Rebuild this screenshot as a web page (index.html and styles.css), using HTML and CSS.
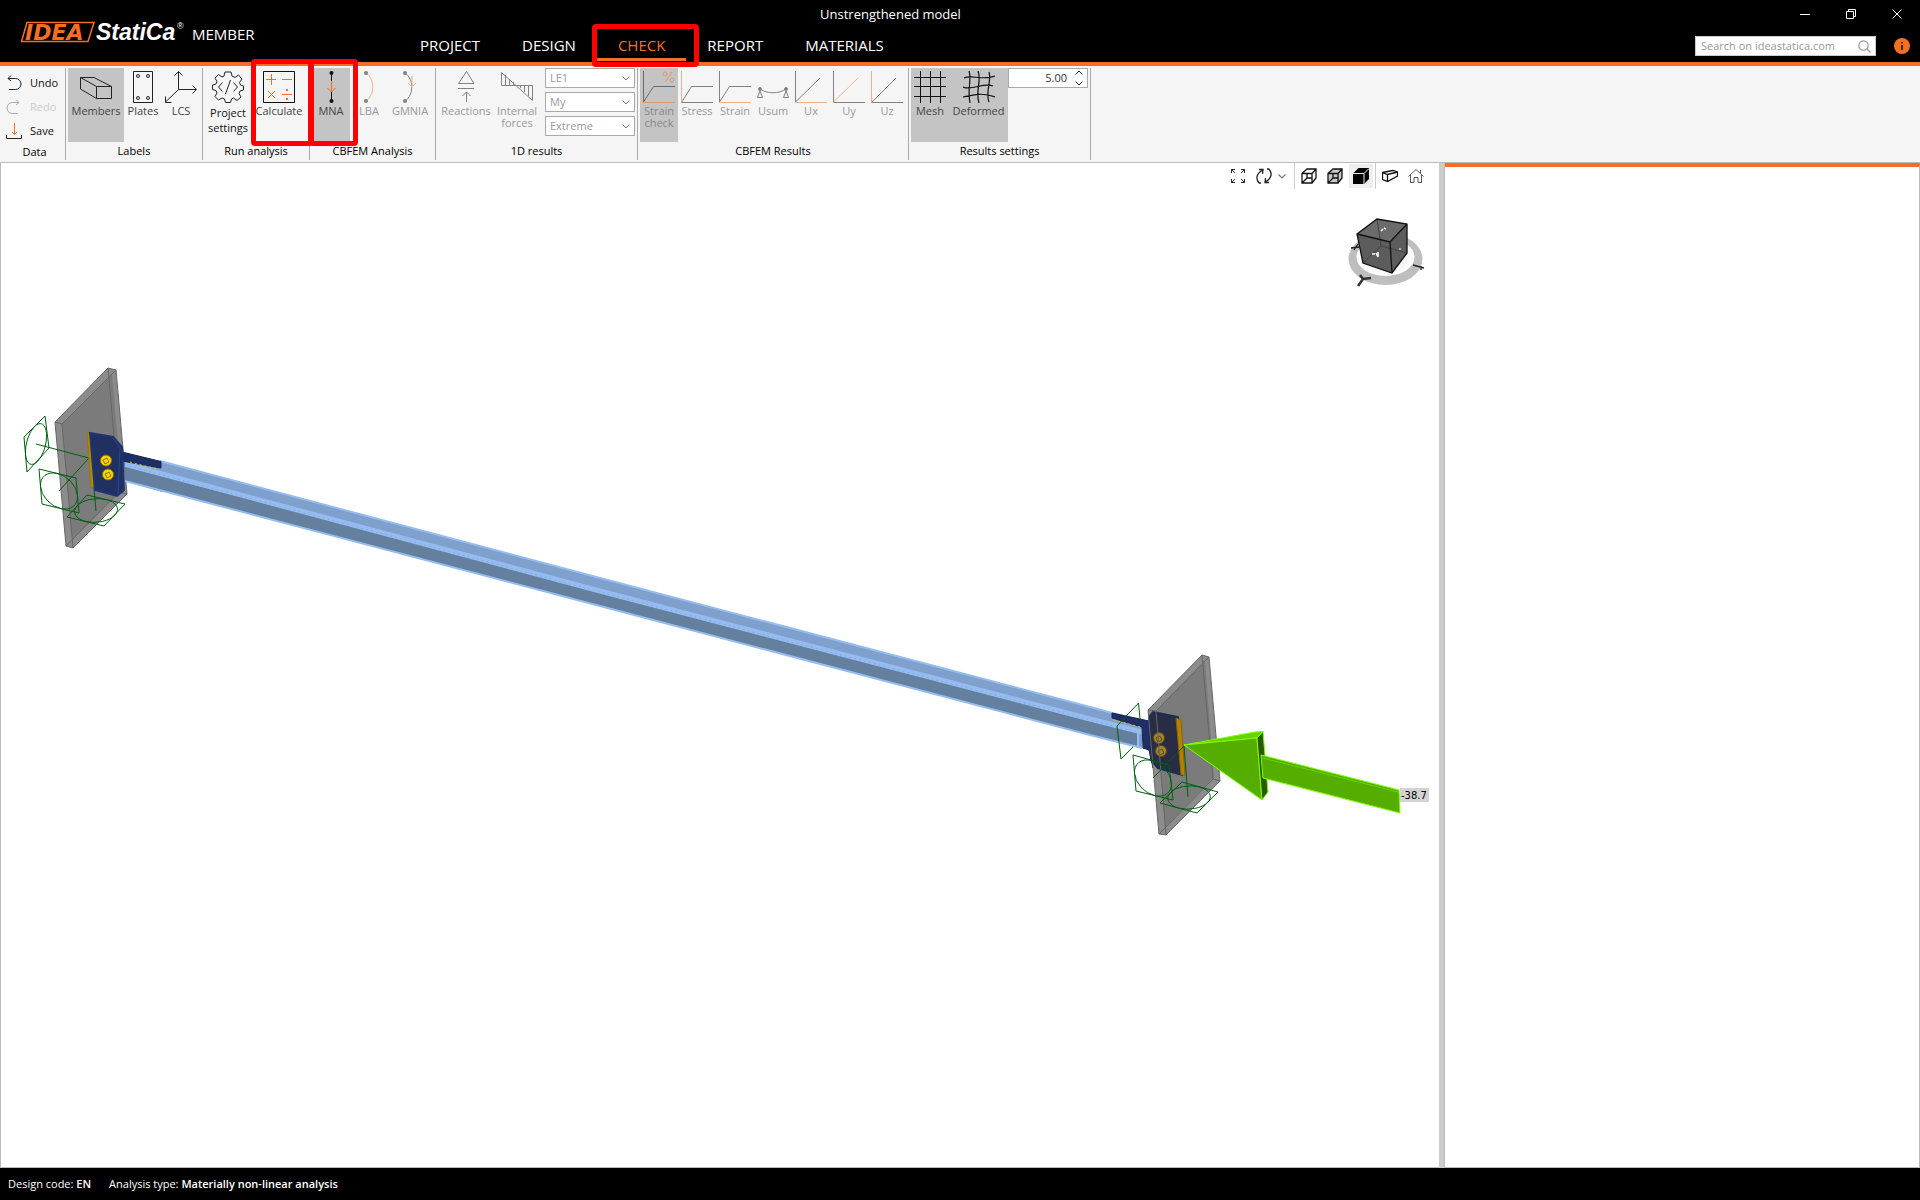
FILE: index.html
```html
<!DOCTYPE html>
<html lang="en">
<head>
<meta charset="utf-8">
<title>Unstrengthened model - IDEA StatiCa Member</title>
<link rel="stylesheet" href="styles.css">
</head>
<body>
<header class="header">
  <div class="brand">
    <svg class="logo" width="168" height="26" viewBox="0 0 168 26" role="img" aria-label="IDEA StatiCa">
      <path d="M7 3.500H74L68 22.500H1.500Z" fill="#000" stroke="#f36f21" stroke-width="1.500"/>
      <text x="5" y="20.500" class="logo-idea">IDEA</text>
      <text x="76" y="21" class="logo-name">StatiCa</text>
      <text x="157" y="10" class="logo-reg">®</text>
    </svg>
    <span class="product">MEMBER</span>
  </div>
  <h1 class="title">Unstrengthened model</h1>
  <div class="window-controls">
    <button aria-label="Minimize"><svg width="10" height="10"><path d="M0 5.500H10" stroke="#fff"/></svg></button>
    <button aria-label="Restore"><svg width="10" height="10" fill="none" stroke="#fff"><path d="M.5 2.500H7.500V9.500H.5ZM2.500 2V.5H9.500V7.500H8"/></svg></button>
    <button aria-label="Close"><svg width="10" height="10"><path d="M.5.5L9.500 9.500M9.500.5L.5 9.500" stroke="#fff"/></svg></button>
  </div>
  <nav class="tabs">
    <a href="#project">PROJECT</a>
    <a href="#design">DESIGN</a>
    <a href="#check" class="active" aria-current="page">CHECK<i class="mark mark-tab"></i></a>
    <a href="#report">REPORT</a>
    <a href="#materials">MATERIALS</a>
  </nav>
  <div class="tools">
    <div class="search">
      <input type="text" aria-label="Search" placeholder="Search on ideastatica.com">
      <svg width="13" height="13" fill="none" stroke="#999" stroke-width="1.200"><circle cx="5.500" cy="5.500" r="4.700"/><path d="M9 9L12.500 12.500"/></svg>
    </div>
    <button class="info" aria-label="Information"><svg width="16" height="16"><circle cx="8" cy="8" r="8" fill="#f36f21"/><path d="M7 4H9V5.500H7ZM7 7H9V12H7Z" fill="#4a2410"/></svg></button>
  </div>
</header>

<section class="ribbon" aria-label="Ribbon">
  <div class="group data">
    <div class="stack">
      <button><svg width="16" height="16" fill="none" stroke="#222"><path d="M5 .5L2 3.500L5 6M2 3.500H9.500A5.500 5.500 0 0 1 9.500 14.500H3"/></svg>Undo</button>
      <button disabled><svg width="16" height="16" fill="none" stroke="#aaa"><path d="M10 .5L13 3.500L10 6M13 3.500H6.500A5.500 5.500 0 0 0 6.500 14.500H12"/></svg>Redo</button>
      <button><svg width="16" height="16" fill="none"><path d="M.5 12V15.500H15.500V12" stroke="#222"/><path d="M8.500 0V11.500M6 9L8.500 11.500L11 9" stroke="#f36f21"/></svg>Save</button>
    </div>
    <h2>Data</h2>
  </div>

  <div class="group">
    <div class="items">
      <button class="cmd w56 on"><svg width="32" height="32" fill="none" stroke="#222"><path d="M.5 6.500H14L31.500 15.500V27.500H16.500L.5 18ZM.5 6.500L16.500 15.500H31.500M16.500 15.500V27.500"/></svg>Members</button>
      <button class="cmd w38"><svg width="32" height="32" fill="none" stroke="#222"><path d="M6.500.5H25.500V31.500H6.500Z"/><circle cx="11" cy="5" r="1.500"/><circle cx="21" cy="5" r="1.500"/><circle cx="11" cy="27" r="1.500"/><circle cx="21" cy="27" r="1.500"/></svg>Plates</button>
      <button class="cmd w38"><svg width="32" height="32" fill="none" stroke="#222"><path d="M13.500 1V18.500H31M9.500 4.500L13.500.5L17.500 4.500M27.500 14.500L31.500 18.500L27.500 22.500M13.500 18.500L.5 31M.5 25.500V31.500H6.500"/></svg>LCS</button>
    </div>
    <h2>Labels</h2>
  </div>

  <div class="group">
    <div class="items">
      <button class="cmd settings"><svg width="32" height="32" fill="none" stroke="#222"><path d="M13 1H19L20 5L23 6.500L26.500 4L30 8L27.500 11.500L28.500 14L31.500 15V19L28 20L27 22.500L29 26L25 29.500L21.500 27L19.500 28L18.500 31.500H13.500L12.500 28L10 27L6.500 29L3 25.500L5 22L4 19.500L.5 18.500V14L4 13L5 10.500L3 7L6.500 3.500L10 6L12 5Z"/><path d="M10.500 11.500L6.500 16L10.500 20.500M21.500 11.500L25.500 16L21.500 20.500M18.500 9L13.500 23"/></svg>Project<br>settings</button>
      <button class="cmd w56"><svg width="32" height="32" fill="none"><path d="M.5.5H31.500V31.500H.5Z" stroke="#111"/><path d="M3 8.500H13M8.500 3V14M19 8.500H29M5 20L12 27M12 20L5 27M19 23.500H29" stroke="#f36f21"/><path d="M23 18H25V20H23ZM23 27H25V29H23Z" fill="#f36f21"/></svg>Calculate<i class="mark mark-calc"></i></button>
    </div>
    <h2>Run analysis</h2>
  </div>

  <div class="group">
    <div class="items analysis">
      <button class="cmd w38 on"><svg width="32" height="32" fill="none"><path d="M16.500 2V30" stroke="#111"/><circle cx="16.500" cy="2" r="2" fill="#111"/><circle cx="16.500" cy="30" r="2" fill="#111"/><path d="M16.500 10V21M12.500 17L16.500 21L20.500 17" stroke="#f36f21"/></svg>MNA<i class="mark mark-mna"></i></button>
      <button class="cmd w38" disabled><svg width="32" height="32" fill="none"><path d="M13 2C22 8 22 24 13 30" stroke="#f36f21"/><circle cx="13" cy="2" r="2" fill="#111"/><circle cx="13" cy="30" r="2" fill="#111"/></svg>LBA</button>
      <button class="cmd w44" disabled><svg width="32" height="32" fill="none"><path d="M11 2C20 8 20 24 11 30" stroke="#111"/><circle cx="11" cy="2" r="2" fill="#111"/><circle cx="11" cy="30" r="2" fill="#111"/><path d="M18 5V16M14 12L18 16L22 12" stroke="#f36f21"/></svg>GMNIA</button>
    </div>
    <h2>CBFEM Analysis</h2>
  </div>

  <div class="group">
    <div class="items">
      <button class="cmd w56" disabled><svg width="32" height="32" fill="none" stroke="#111"><path d="M16.500.5L24 12.500H8.500ZM8 17.500H24M16.500 31V21M12.500 25L16.500 21L20.500 25"/></svg>Reactions</button>
      <button class="cmd w46" disabled><svg width="32" height="32" fill="none" stroke="#111"><path d="M.5 1.500V14.500H31.500V29.500ZM4.500 4V14M8.500 8V14M12.500 11V14M19.500 15V17M23.500 15V21M27.500 15V25"/></svg>Internal<br>forces</button>
      <div class="combos">
        <span class="combo"><select aria-label="Load" disabled><option>LE1</option></select><svg width="8" height="5" fill="none" stroke="#777"><path d="M.5.5L4 4L7.500.5"/></svg></span>
        <span class="combo"><select aria-label="Force" disabled><option>My</option></select><svg width="8" height="5" fill="none" stroke="#777"><path d="M.5.5L4 4L7.500.5"/></svg></span>
        <span class="combo"><select aria-label="Values" disabled><option>Extreme</option></select><svg width="8" height="5" fill="none" stroke="#777"><path d="M.5.5L4 4L7.500.5"/></svg></span>
      </div>
    </div>
    <h2>1D results</h2>
  </div>

  <div class="group">
    <div class="items">
      <button class="cmd w38 on" disabled><svg width="32" height="32" fill="none"><path d="M.5 0V31L10.500 15.500H32" stroke="#111"/><path d="M0 31.500H32M29 1L22 11" stroke="#f36f21"/><circle cx="22" cy="3" r="2" stroke="#f36f21"/><circle cx="29" cy="9" r="2" stroke="#f36f21"/></svg>Strain<br>check</button>
      <button class="cmd w38" disabled><svg width="32" height="32" fill="none"><path d="M32 31.500H.5L10.500 15.500H32" stroke="#111"/><path d="M.5 0V31" stroke="#f36f21"/></svg>Stress</button>
      <button class="cmd w38" disabled><svg width="32" height="32" fill="none"><path d="M.5 0V31L10.500 15.500H32" stroke="#111"/><path d="M0 31.500H32" stroke="#f36f21"/></svg>Strain</button>
      <button class="cmd w38" disabled><svg width="32" height="32" fill="none" stroke="#111"><path d="M3 18C10 23 22 23 29 18M3 20L.5 26.500H5.500ZM29 20L26.500 26.500H31.500Z"/><circle cx="3" cy="18" r="1.500" fill="#111"/><circle cx="29" cy="18" r="1.500" fill="#111"/></svg>Usum</button>
      <button class="cmd w38" disabled><svg width="32" height="32" fill="none"><path d="M.5 0V31L25 7" stroke="#111"/><path d="M0 31.500H32" stroke="#f36f21"/></svg>Ux</button>
      <button class="cmd w38" disabled><svg width="32" height="32" fill="none"><path d="M.5 0V31.500H32" stroke="#111"/><path d="M.5 31L25 7" stroke="#f36f21"/></svg>Uy</button>
      <button class="cmd w38" disabled><svg width="32" height="32" fill="none"><path d="M32 31.500H.5L25 7" stroke="#111"/><path d="M.5 0V31" stroke="#f36f21"/></svg>Uz</button>
    </div>
    <h2>CBFEM Results</h2>
  </div>

  <div class="group">
    <div class="items">
      <button class="cmd w38 on"><svg width="32" height="32" stroke="#111"><path d="M6.500 0V32M16.500 0V32M26.500 0V32M0 6.500H32M0 15.500H32M0 25.500H32"/></svg>Mesh</button>
      <button class="cmd w59 on"><svg width="32" height="32" fill="none" stroke="#111" stroke-width="1.200"><path d="M6 0C9 8 4 18 7 32M15 0C19 9 12 20 16 32M26 1C29 10 22 20 26 31M1 7C9 3 18 10 32 5M0 16C10 20 20 11 30 15M0 26C9 24 20 21 32 26"/></svg>Deformed</button>
      <div class="spin"><input type="text" aria-label="Deformation scale" value="5.00"><svg width="8" height="16" fill="none" stroke="#222"><path d="M.5 4.500L4 1L7.500 4.500M.5 11.500L4 15L7.500 11.500"/></svg></div>
    </div>
    <h2>Results settings</h2>
  </div>
</section>

<main class="workspace">
  <section class="viewport" aria-label="3D scene">
    <div class="view-tools">
      <button aria-label="Zoom all"><svg width="16" height="16" fill="none" stroke="#222"><path d="M1.500 5V1.500H5M1.500 1.500L5 5M11 1.500H14.500V5M14.500 1.500L11 5M1.500 11V14.500H5M1.500 14.500L5 11M14.500 11V14.500H11M14.500 14.500L11 11"/></svg></button>
      <button aria-label="Rotate"><svg width="16" height="16" fill="none" stroke="#222" stroke-width="1.300"><path d="M3 15C-1 10 1 5 7 2M3 1.500L7 1.500L6.500 6M13 1C17 6 15 11 9 14M13 14.500H9L9.500 10M3 15H5M11 1H13"/></svg></button>
      <button class="narrow" aria-label="Rotation options"><svg width="8" height="5" fill="none" stroke="#777" stroke-width="1.200"><path d="M.5.5L4 4L7.500.5"/></svg></button>
      <span class="divider"></span>
      <button aria-label="Wireframe"><svg width="16" height="16" fill="none" stroke="#111" stroke-width="1.300"><path d="M1 5.500L6 1H15V10L11 15H1ZM1 5.500H11V15M11 5.500L15 1M6 6V10H11M1.500 14.500L6 10"/></svg></button>
      <button aria-label="Transparent"><svg width="16" height="16" fill="#c8c8c8" stroke="#111" stroke-width="1.300"><path d="M1 5.500L6 1H15V10L11 15H1ZM1 5.500H11V15M11 5.500L15 1M6 6V10H11M1.500 14.500L6 10"/></svg></button>
      <button class="picked" aria-label="Solid"><svg width="16" height="16"><path d="M0 5.500L5.500 0H16V11L11 16H0Z"/><path d="M0 5.500H11V16M11 5.500L16 .5" fill="none" stroke="#eee"/></svg></button>
      <span class="divider"></span>
      <button aria-label="Perspective"><svg width="16" height="16" fill="none" stroke="#111" stroke-width="1.300"><path d="M.5 4.500L11 2.500L15.500 4V8L5.500 13.500L.5 11.500ZM.5 4.500L5.500 6.500L15.500 4M5.500 6.500V13.500"/></svg></button>
      <button aria-label="Home view"><svg width="16" height="16" fill="none" stroke="#555"><path d="M.5 8.500L8 1.500L15.500 8.500M2.500 7V14.500H6V9.500H10V14.500H13.500V7M12.500 5V2"/></svg></button>
    </div>
    <svg class="scene" viewBox="1 189 1438 977" preserveAspectRatio="xMinYMin meet" role="img" aria-label="Steel beam between two end plates with axial load">
      <defs><radialGradient id="glow"><stop offset="0" stop-color="#ddd"/><stop offset="1" stop-color="#fff"/></radialGradient></defs>
      <!-- orientation cube -->
      <ellipse cx="1385.500" cy="259" rx="37" ry="26" fill="#bebebe"/>
      <ellipse cx="1385.500" cy="257" rx="29" ry="19" fill="url(#glow)"/>
      <path d="M1357 234L1377 219L1407 224L1407 253L1392 273L1363 263Z" fill="#5c5c5c"/>
      <path d="M1357 234L1377 219L1407 224L1390 242Z" fill="#6b6b6b"/>
      <path d="M1377 219L1381 246L1363 263M1381 246L1407 253" fill="none" stroke="#444"/>
      <path d="M1357 234L1377 219L1407 224L1407 253L1392 273L1363 263ZM1357 234L1390 242L1407 224M1390 242L1392 273" fill="none" stroke="#111" stroke-width="1.300"/>
      <path d="M1381 231L1383 229M1384 228L1386 229M1372 254H1375M1376 253L1378 257L1378 252" stroke="#fff" fill="none" stroke-width="1.500"/>
      <path d="M1400 248V250" stroke="#fff"/>
      <path d="M1351 248L1359 247M1354 250L1358 244M1413 265L1424 268M1421 266V270" stroke="#222" stroke-width="1.300"/>
      <path d="M1360 275L1363 279L1371 278M1363 279L1358 286" fill="none" stroke="#333" stroke-width="2.500"/>

      <!-- start plate and support symbols -->
      <path d="M55 422L108 368L116 370L127 494L73 548L66 546Z" fill="#8c8c8c"/>
      <path d="M62 424L112 374L122 490L72 540Z" fill="#7b7b7b"/>
      <path d="M55 422L108 368L116 370L127 494L73 548L66 546ZM55 422L62 424L116 370M62 424L73 548M108 368L119 492L127 494M119 492L66 546" class="edge"/>
      <g class="support">
        <path d="M45 416L49 448L27 472L24 437ZM39 469L76 478L79 513L42 504ZM87 495L125 504L104 526L67 517ZM36 444L89 458L59 491M94 488L96 511"/>
        <circle r="1" transform="matrix(10.500 -10.500 1.500 17.500 36 444)"/>
        <circle r="1" transform="matrix(18.500 4.500 1.500 17.500 59 491)"/>
        <circle r="1" transform="matrix(19 4.500 -10 11 96 510.500)"/>
      </g>

      <!-- beam -->
      <path d="M125 480L163 491" stroke="#1e2f66" stroke-width="2"/>
      <path d="M125 461L160 461L600 578L1090 707L1142 721V748L1090 735L600 606L125 481Z" fill="#7f9fcc"/>
      <path d="M125 467L600 591L1138 731V747L1090 735L600 606L125 481Z" fill="#65809f"/>
      <path d="M125 464L600 591L1090 719L1142 732" fill="none" stroke="#94bcf1" stroke-width="5"/>
      <path d="M125 465L600 592L1090 720L1140 733" fill="none" stroke="#7f9fcc" stroke-dasharray="1 4"/>
      <path d="M160 461L600 578L1090 707L1142 721M125 481L600 606L1090 735L1142 748M1138 731V747" fill="none" stroke="#94bcf1" stroke-width="2"/>

      <!-- start connection -->
      <path d="M122 452L161 461.500V468L122 461Z" fill="#1e2f66" stroke="#17244f"/>
      <path d="M130 462L157 469" stroke="#f5c400" stroke-dasharray="2 3"/>
      <path d="M87 433H90L94 488L91 487Z" fill="#b58a00" stroke="#9a7500"/>
      <path d="M90 433L113 437L122 447L124 490L117 496L95 490Z" fill="#203060" stroke="#1c3576" stroke-width="2"/>
      <path d="M113 438L120 448L118 494" fill="none" stroke="#2c468c"/>
      <g fill="#ffd500" stroke="#8a7000"><circle cx="106" cy="460.500" r="5.500"/><circle cx="108" cy="474.500" r="5.500"/><path d="M103 460L107 458L109 462L105 464ZM105 474L109 472L111 476L107 478Z"/></g>

      <!-- end plate and connection -->
      <path d="M1112 713L1149 721L1153 712V768L1149 750L1143 748L1142 727L1112 718Z" fill="#1e2f66" stroke="#17244f"/>
      <path d="M1114 720L1140 727" stroke="#f5c400" stroke-dasharray="2 3"/>
      <path d="M1148 710L1202 655L1209 657L1220 781L1166 835L1159 834Z" fill="#8c8c8c"/>
      <path d="M1156 711L1205 661L1214 777L1165 827Z" fill="#7b7b7b"/>
      <path d="M1153 712L1178 717L1182 775L1158 768L1151 760L1149 717Z" fill="#282c45" stroke="#1f2b55" stroke-width="2"/>
      <path d="M1176 718L1181 720L1185 775L1181 775Z" fill="#b58200" stroke="#8a6500"/>
      <g fill="#a88422" stroke="#5d4c1c"><circle cx="1159" cy="738" r="5.500"/><circle cx="1161" cy="751" r="5.500"/><path d="M1156 738L1160 736L1162 740L1158 742ZM1158 751L1162 749L1164 753L1160 755Z"/></g>
      <path d="M1148 710L1202 655L1209 657L1220 781L1166 835L1159 834ZM1148 710L1156 711L1209 657M1156 711L1166 835M1202 655L1213 779L1220 781M1213 779L1159 834" class="edge"/>
      <g class="support">
        <path d="M1140 719L1138.500 703L1117 726L1121 759L1133 747M1133 755L1169 765L1173 800L1136 791ZM1182 782L1218 792L1197 813L1160 803ZM1188 797L1184 746L1153 778"/>
        <circle r="1" transform="matrix(18.500 4.500 1.500 17.500 1153 778)"/>
        <circle r="1" transform="matrix(18.500 5 -10.500 10.500 1189 797.500)"/>
      </g>

      <!-- axial load -->
      <g stroke="#7fff00" stroke-linejoin="round">
        <path d="M1184 745L1255 732L1263 731.500L1257 738Z" fill="#66d400"/>
        <path d="M1184 745L1257 738L1262 800Z" fill="#55ad00"/>
        <path d="M1257 738L1263 731.500L1268 792L1262 800Z" fill="#2b5800"/>
        <path d="M1261 755L1399 790L1400 813L1263 778Z" fill="#55ad00"/>
        <path d="M1263 758L1398 792" fill="none" stroke="#66d400"/>
      </g>
      <path d="M1400 788H1429V802H1400Z" fill="#d3d3d3"/>
      <text x="1401" y="799" class="load">-38.7</text>
    </svg>
  </section>
  <div class="splitter" role="separator"></div>
  <aside class="panel" aria-label="Results"></aside>
</main>

<footer class="status">
  <span>Design code: <b>EN</b></span>
  <span>Analysis type: <b>Materially non-linear analysis</b></span>
</footer>
</body>
</html>
```
FILE: styles.css
```css
* { box-sizing: border-box; }

body {
  margin: 0;
  min-height: 100vh;
  display: flex;
  flex-direction: column;
  background: #fff;
  color: #111;
  font: 11px/16px "Open Sans", "Noto Sans", sans-serif;
}

button, input, select {
  font: inherit;
  color: inherit;
  margin: 0;
  padding: 0;
  border: 0;
  background: none;
}

svg { display: block; flex: none; }
h1, h2 { margin: 0; font-weight: 400; }

/* Header */
.header {
  display: grid;
  grid-template-columns: 399px 1fr 538px;
  grid-template-rows: 28px 34px;
  background: #000;
  color: #fff;
  border-bottom: 4px solid #f36f21;
}
.brand {
  grid-row: 1 / 3;
  display: flex;
  align-items: center;
  gap: 4px;
  padding-left: 20px;
  padding-top: 2px;
}
.logo-idea { font: italic 700 22px "DejaVu Sans", sans-serif; fill: #f36f21; }
.logo-name { font: italic 700 23px "Liberation Sans", sans-serif; fill: #fff; }
.logo-reg { font: 9px "Liberation Sans", sans-serif; fill: #fff; }
.product { font-size: 15px; line-height: 20px; padding-top: 4px; }
.title { font-size: 13px; line-height: 28px; text-align: center; }
.window-controls { display: flex; justify-content: flex-end; }
.window-controls button { width: 46px; display: grid; place-items: center; }
.tabs { grid-column: 2; display: flex; padding-bottom: 1px; }
.tabs a {
  position: relative;
  padding: 3px 21px 0;
  border-bottom: 3px solid transparent;
  color: #fff;
  font-size: 15px;
  line-height: 28px;
  text-decoration: none;
}
.tabs .active { color: #f36f21; border-bottom-color: #f36f21; }
.tools { display: flex; align-items: center; justify-content: flex-end; gap: 18px; padding: 2px 10px 0 0; }
.search {
  display: flex;
  align-items: center;
  width: 181px;
  height: 20px;
  padding: 0 4px 0 5px;
  background: #fff;
  border: 1px solid #ccc;
}
.search input { flex: 1; min-width: 0; font-size: 11px; outline: 0; }
.search input::placeholder { color: #999; opacity: 1; }

/* Highlight frames drawn over the controls */
.mark { position: absolute; border: 5px solid #f00; border-radius: 4px; pointer-events: none; z-index: 2; }
.mark-tab { inset: -4px -13px -9px -5px; }
.mark-calc { inset: -9px -6px -4px 0; }
.mark-mna { inset: -9px -8px -4px -3px; }

/* Ribbon */
.ribbon {
  display: flex;
  padding: 2px 0;
  background: #f5f5f5;
  border-bottom: 1px solid #bbb;
}
.group {
  display: flex;
  flex-direction: column;
  height: 92px;
  padding: 0 2px;
  border-right: 1px solid #aaa;
}
.group h2 { font-size: 11px; line-height: 18px; text-align: center; color: #000; }
.items { display: flex; height: 74px; }
.cmd {
  position: relative;
  display: flex;
  flex-direction: column;
  align-items: center;
  padding-top: 3px;
  line-height: 12px;
  color: #444;
}
.cmd svg { margin-bottom: 2px; }
.cmd:disabled { color: #999; }
.cmd:disabled svg { opacity: .5; }
.on { background: #c4c4c4; }
.on:disabled { color: #888; }
.w38 { width: 38px; }
.w44 { width: 44px; }
.w46 { width: 46px; }
.w56 { width: 56px; }
.w59 { width: 59px; }
.settings { width: 46px; line-height: 15px; color: #111; }
.analysis { padding-right: 1px; }
.data { padding: 3px 2px 0 6px; width: 66px; }
.stack button { display: flex; align-items: center; gap: 8px; height: 24px; }
.stack button:disabled { color: #ccc; }
.combos { display: flex; flex-direction: column; gap: 4px; padding-left: 5px; }
.combo {
  display: flex;
  align-items: center;
  width: 90px;
  height: 20px;
  padding: 0 4px;
  background: #fff;
  border: 1px solid #aaa;
}
.combo select { appearance: none; flex: 1; color: #999; opacity: 1; }
.spin {
  display: flex;
  align-items: center;
  width: 80px;
  height: 20px;
  padding: 0 4px;
  gap: 8px;
  background: #fff;
  border: 1px solid #aaa;
}
.spin input { flex: 1; min-width: 0; text-align: right; color: #333; }

/* Work area */
.workspace { flex: 1; display: grid; grid-template-columns: minmax(0, 1fr) 6px 475px; }
.viewport { border-left: 1px solid #bbb; border-bottom: 1px solid #bbb; }
.view-tools { display: flex; justify-content: flex-end; height: 26px; padding-right: 11px; gap: 2px; }
.view-tools button { display: grid; place-items: center; width: 24px; height: 24px; margin-top: 1px; }
.view-tools .narrow { width: 14px; justify-items: start; }
.view-tools .picked { background: #eee; }
.divider { width: 1px; background: #ccc; }
.scene { width: 100%; height: auto; }
.edge { fill: none; stroke: #666; }
.support { fill: none; stroke: #006010; }
.support circle { vector-effect: non-scaling-stroke; }
.load { font: 10px "DejaVu Sans", sans-serif; fill: #000; }
.splitter { background: #ccc; border-right: 1px solid #bbb; }
.panel { border-top: 4px solid #f36f21; border-right: 1px solid #bbb; border-bottom: 1px solid #bbb; }

/* Status bar */
.status {
  display: flex;
  gap: 18px;
  padding: 8px;
  background: #000;
  color: #fff;
}
.status b { font-weight: 600; }
```
